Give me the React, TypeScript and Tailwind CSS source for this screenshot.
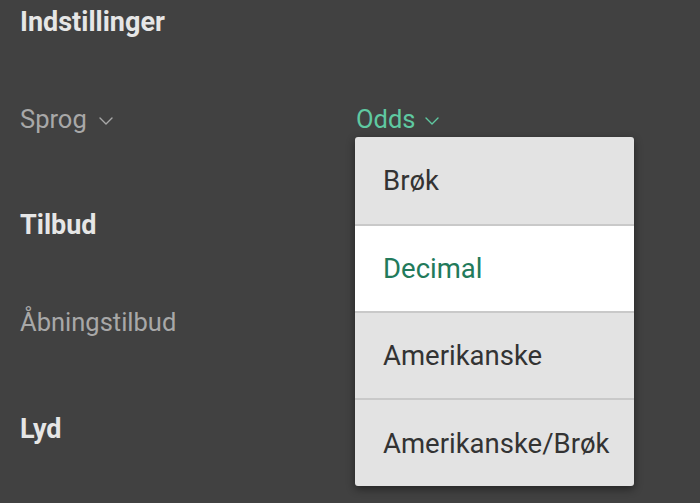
const options = ["Brøk", "Decimal", "Amerikanske", "Amerikanske/Brøk"];
const selected = "Decimal";

function Chevron({ className }: { className: string }) {
  return (
    <svg width="14" height="8" viewBox="0 0 14 8" fill="none" className={className}>
      <polyline points="1,1 7,7 13,1" stroke="currentColor" strokeWidth="1.4" strokeLinecap="round" strokeLinejoin="round" />
    </svg>
  );
}

export default function App() {
  return (
    <div className="w-[700px] h-[503px] overflow-hidden bg-[#414141] font-['Roboto',sans-serif] relative">
      <div className="pl-5 pt-[1px]">
        {/* Section heading */}
        <div className="h-[42px] flex items-center">
          <h1 className="text-[27px] leading-none font-bold text-[#e6e6e6]">Indstillinger</h1>
        </div>

        {/* Sprog / Odds row */}
        <div className="h-[154px] flex items-center">
          <div className="w-[336px] flex items-center gap-3 text-[#a8a8a8]">
            <span className="text-[25.5px] leading-none">Sprog</span>
            <Chevron className="mt-[1px]" />
          </div>
          <div className="relative flex items-center gap-[10px] text-[#5fc9a1]">
            <span className="text-[25.5px] leading-none">Odds</span>
            <Chevron className="mt-[1px]" />

            {/* Odds dropdown menu */}
            <div className="absolute left-[-1px] top-[30px] w-[279px] z-10 rounded-[3px] bg-[#e3e3e3] shadow-[0_3px_8px_rgba(0,0,0,0.45)] overflow-hidden">
              {options.map((opt, i) => (
                <div
                  key={opt}
                  className={`h-[87px] last:h-[88px] flex items-center pl-[28px] ${i > 0 ? "border-t-2 border-[#c9c9c9]" : ""} ${
                    opt === selected ? "bg-white text-[#227a5b]" : "text-[#333333]"
                  }`}
                >
                  <span className="text-[27.5px] leading-none">{opt}</span>
                </div>
              ))}
            </div>
          </div>
        </div>

        {/* Tilbud */}
        <div className="h-[56px] flex items-center">
          <h2 className="text-[27px] leading-none font-bold text-[#e6e6e6]">Tilbud</h2>
        </div>
        <div className="h-[140px] flex items-center">
          <span className="text-[25.5px] leading-none text-[#a8a8a8]">Åbningstilbud</span>
        </div>

        {/* Lyd */}
        <div className="h-[72px] flex items-center">
          <h2 className="text-[27px] leading-none font-bold text-[#e6e6e6]">Lyd</h2>
        </div>
      </div>
    </div>
  );
}
